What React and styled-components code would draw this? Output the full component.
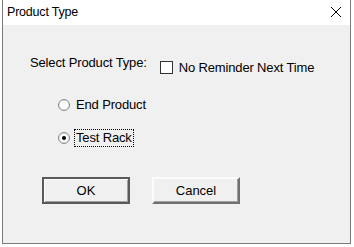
import React from 'react';
import styled, { createGlobalStyle } from 'styled-components';

const GlobalStyle = createGlobalStyle`
  html, body {
    margin: 0;
    padding: 0;
    background: #ffffff;
    width: 354px;
    height: 247px;
    overflow: hidden;
  }
`;

const Desk = styled.div`
  width: 354px;
  height: 247px;
  padding-left: 2px;
  box-sizing: border-box;
`;

const Window = styled.div`
  width: 349px;
  height: 244px;
  box-sizing: border-box;
  border: 1px solid #7a7a7a;
  border-top: none;
  background: #f0f0f0;
  display: flex;
  flex-direction: column;
  font-family: "Liberation Sans", Arial, sans-serif;
  color: #000;
`;

const TitleBar = styled.div`
  height: 25px;
  background: #ffffff;
  display: flex;
  align-items: center;
  justify-content: space-between;
  padding: 0 8px 0 4px;
  flex-shrink: 0;
`;

const Title = styled.span`
  font-size: 12.5px;
  letter-spacing: -0.2px;
  margin-top: -2px;
`;

const CloseIcon = styled.svg`
  width: 12px;
  height: 12px;
  margin-top: -1px;
`;

const Body = styled.div`
  flex: 1;
  display: flex;
  flex-direction: column;
  padding: 30px 0 0 27px;
`;

const TopRow = styled.div`
  display: flex;
  align-items: flex-start;
`;

const Label = styled.span`
  font-size: 13px;
  line-height: 15px;
  letter-spacing: -0.15px;
  margin-right: 13px;
`;

const Check = styled.label`
  display: flex;
  align-items: center;
  margin-top: 5px;
  font-size: 13px;
  letter-spacing: -0.15px;
`;

const Box = styled.span`
  width: 11px;
  height: 11px;
  border: 1px solid #333;
  background: #fff;
  margin-right: 6px;
`;

const Radios = styled.div`
  display: flex;
  flex-direction: column;
  gap: 15px;
  margin: 21px 0 0 28px;
`;

const RadioRow = styled.label`
  display: flex;
  align-items: center;
  height: 18px;
  font-size: 13px;
  letter-spacing: -0.15px;
`;

const Dot = styled.span`
  width: 10px;
  height: 10px;
  border-radius: 50%;
  border: 1px solid #8a8a8a;
  background: #fff;
  box-shadow: inset 0 0 0 1px #e3e3e3;
  display: flex;
  align-items: center;
  justify-content: center;
  margin-right: 4px;

  &::after {
    content: '';
    width: 4px;
    height: 4px;
    border-radius: 50%;
    background: ${p => (p.$on ? '#000' : 'transparent')};
  }
`;

const RadioText = styled.span`
  padding: 0 1px;
  line-height: 16px;
  border: 1px dotted ${p => (p.$focus ? '#000' : 'transparent')};
`;

const Buttons = styled.div`
  display: flex;
  gap: 22px;
  margin: 30px 0 0 12px;
`;

const Button = styled.button`
  width: 88px;
  height: 27px;
  box-sizing: border-box;
  background: #f0f0f0;
  font-family: "Liberation Sans", Arial, sans-serif;
  font-size: 13px;
  color: #000;
  padding: 0;
  border: 2px solid;
  border-color: ${p => (p.$default ? '#5a5a5a' : '#fcfcfc #707070 #707070 #fcfcfc')};
  box-shadow: ${p => (p.$default ? 'inset 1px 1px 0 #fcfcfc, inset -1px -1px 0 #a0a0a0' : 'inset -1px -1px 0 #a0a0a0')};
`;

export default function App() {
  return (
    <Desk>
      <GlobalStyle />
      <Window>
        <TitleBar>
          <Title>Product Type</Title>
          <CloseIcon viewBox="0 0 12 12">
            <path d="M1 1 L11 11 M11 1 L1 11" stroke="#000" strokeWidth="1" fill="none" />
          </CloseIcon>
        </TitleBar>
        <Body>
          <TopRow>
            <Label>Select Product Type:</Label>
            <Check>
              <Box />
              No Reminder Next Time
            </Check>
          </TopRow>
          <Radios>
            <RadioRow>
              <Dot />
              <RadioText>End Product</RadioText>
            </RadioRow>
            <RadioRow>
              <Dot $on />
              <RadioText $focus>Test Rack</RadioText>
            </RadioRow>
          </Radios>
          <Buttons>
            <Button $default>OK</Button>
            <Button>Cancel</Button>
          </Buttons>
        </Body>
      </Window>
    </Desk>
  );
}
